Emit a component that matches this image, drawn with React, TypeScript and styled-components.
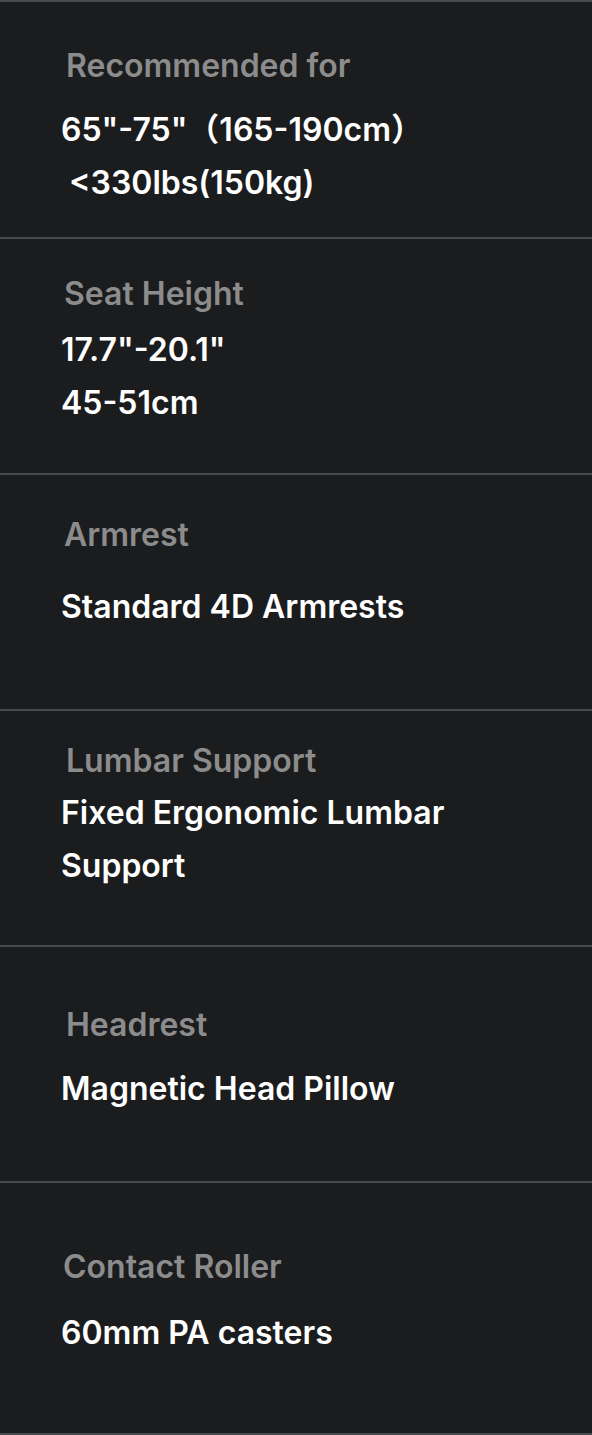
import React from 'react';
import styled, { createGlobalStyle } from 'styled-components';

const colors = {
  bg: '#1b1c1e',
  line: '#48494b',
  label: '#8c8c8c',
  value: '#ffffff',
};

const GlobalStyle = createGlobalStyle`
  html, body {
    margin: 0;
    padding: 0;
    background: ${colors.bg};
  }
  body {
    font-family: Inter, "Noto Sans CJK SC", sans-serif;
  }
`;

const SpecList = styled.div`
  width: 592px;
  display: flex;
  flex-direction: column;
  background: ${colors.bg};
  border-top: 2px solid ${colors.line};
`;

const SpecRow = styled.div<{ $height: number; $top: number }>`
  box-sizing: border-box;
  height: ${(p) => p.$height}px;
  padding: ${(p) => p.$top}px 0 0 61px;
  border-bottom: 2px solid ${colors.line};
  display: flex;
  flex-direction: column;
  align-items: flex-start;
`;

const Label = styled.div<{ $indent: number }>`
  margin-left: ${(p) => p.$indent}px;
  font-size: 32px;
  line-height: 40px;
  font-weight: 600;
  color: ${colors.label};
`;

const Value = styled.div<{ $gap: number }>`
  margin-top: ${(p) => p.$gap}px;
  font-size: 32px;
  line-height: 52.5px;
  font-weight: 600;
  color: ${colors.value};
  white-space: pre-wrap;
`;

type Spec = {
  label: string;
  lines: string[];
  height: number;
  top: number;
  indent: number;
  gap: number;
};

const specs: Spec[] = [
  { label: 'Recommended for', lines: ['65"-75"（165-190cm）', ' <330lbs(150kg)'], height: 237, top: 44, indent: 5, gap: 18 },
  { label: 'Seat Height', lines: ['17.7"-20.1"', '45-51cm'], height: 236, top: 35, indent: 3, gap: 10 },
  { label: 'Armrest', lines: ['Standard 4D Armrests'], height: 236, top: 40, indent: 3, gap: 26 },
  { label: 'Lumbar Support', lines: ['Fixed Ergonomic Lumbar', 'Support'], height: 236, top: 30, indent: 5, gap: 6 },
  { label: 'Headrest', lines: ['Magnetic Head Pillow'], height: 236, top: 58, indent: 5, gap: 18 },
  { label: 'Contact Roller', lines: ['60mm PA casters'], height: 252, top: 64, indent: 2, gap: 20 },
];

export default function App() {
  return (
    <>
      <GlobalStyle />
      <SpecList>
        {specs.map((spec) => (
          <SpecRow key={spec.label} $height={spec.height} $top={spec.top}>
            <Label $indent={spec.indent}>{spec.label}</Label>
            <Value $gap={spec.gap}>{spec.lines.join('\n')}</Value>
          </SpecRow>
        ))}
      </SpecList>
    </>
  );
}
